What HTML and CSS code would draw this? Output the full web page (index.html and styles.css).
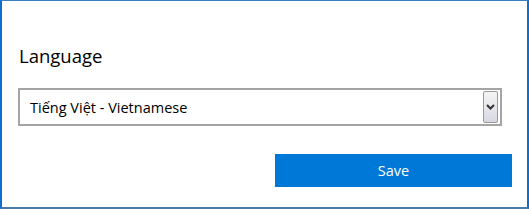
FILE: index.html
```html
<!DOCTYPE html>
<html>
<head>
<meta charset="utf-8">
<link rel="stylesheet" href="styles.css">
</head>
<body>
<div class="dialog">
  <div class="label">Language</div>
  <div class="select">
    <span class="value">Tiếng Việt - Vietnamese</span>
    <span class="arrow">
      <svg width="9" height="6" viewBox="0 0 9 6"><path d="M1 1 L4.5 4.5 L8 1" fill="none" stroke="#333" stroke-width="2"/></svg>
    </span>
  </div>
  <div class="actions">
    <button class="save">Save</button>
  </div>
</div>
</body>
</html>
```
FILE: styles.css
```css
html, body { margin: 0; padding: 0; background: #fff; }
body { width: 529px; height: 209px; overflow: hidden; }
.dialog {
  box-sizing: border-box;
  width: 529px;
  height: 209px;
  border-left: 2px solid #0a6fd0;
  border-right: 2px solid #0a6fd0;
  border-top: 1px solid #3a7fc0;
  border-bottom: 2px solid #4a7aa8;
  padding: 42px 25px 0 16px;
  font-family: "Open Sans", "Noto Sans", sans-serif;
  color: #000;
}
.label { font-size: 18.5px; line-height: 26px; margin-left: 1px; }
.select {
  margin-top: 19px;
  box-sizing: border-box;
  height: 38px;
  border: 2px solid #a5a5a5;
  display: flex;
  align-items: center;
  padding: 0 2px 0 10px;
}
.value { flex: 1; font-size: 14.5px; }
.arrow {
  width: 15px;
  height: 32px;
  box-sizing: border-box;
  border: 1px solid #9a9a9a;
  border-radius: 2px;
  background: linear-gradient(#f4f4f4, #d8d8e4);
  display: flex;
  align-items: center;
  justify-content: center;
}
.actions { display: flex; justify-content: flex-end; margin-top: 28px; }
.save {
  width: 237px;
  height: 33px;
  margin-right: -10px;
  background: #0078d7;
  border: none;
  color: #fff;
  font-family: "Open Sans", "Noto Sans", sans-serif;
  font-size: 14.5px;
  padding: 0;
}
```
